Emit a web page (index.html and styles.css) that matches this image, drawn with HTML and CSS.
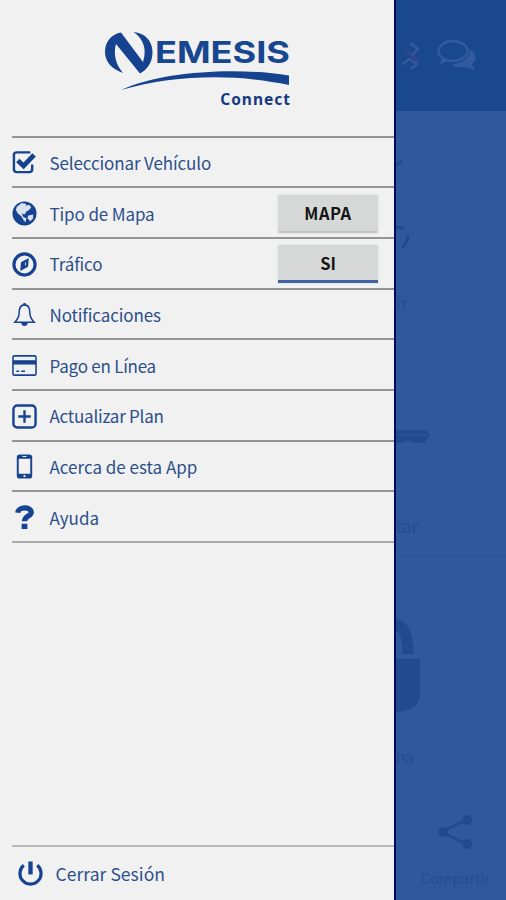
FILE: index.html
```html
<!DOCTYPE html>
<html lang="es">
<head>
<meta charset="utf-8">
<title>Nemesis Connect</title>
<link rel="stylesheet" href="styles.css">
</head>
<body>
<div class="app">
  <aside class="drawer">
    <header class="brand">
      <svg class="logo" viewBox="0 0 190 64" width="190" height="64">
        <path class="fill" d="M19 3.500L41 33C45 21 42 10 31.500 3C43 4 50.500 12 50.500 23C50.500 33 46 40 38 44.500L14 15C11 25 14 36 21 44C9 40 3 32 3 23C3 12 10 5 19 3.500Z"/>
        <text class="wordmark" x="53" y="34" textLength="135" lengthAdjust="spacingAndGlyphs">EMESIS</text>
        <path class="fill" d="M19 61C60 42 135 38 187 46.500V56C135 45 75 45 19 61Z"/>
      </svg>
      <div class="product">Connect</div>
    </header>
    <nav class="menu">
      <div class="row">
        <svg class="icon" viewBox="0 0 26 26"><path class="line" d="M21 15V20Q21 23 18 23H5Q2 23 2 20V5Q2 2.500 5 2.500H19"/><path class="heavy" d="M6 11L12 16.500L23 5"/></svg>
        <span class="label">Seleccionar Vehículo</span>
      </div>
      <div class="row">
        <svg class="icon" viewBox="0 0 26 26"><circle class="fill" cx="13" cy="13" r="12.500"/><path class="land" d="M5 6L10 2L15 3L14 5L18 4L20 7L17 10L15 11L13 14L10 13L12 17L15 18L14 22L12 20L10 16L6 13L4 9ZM17 15L22 14L22 18L19 21L16 18Z"/></svg>
        <span class="label">Tipo de Mapa</span>
        <button class="toggle">MAPA</button>
      </div>
      <div class="row">
        <svg class="icon" viewBox="0 0 26 26"><circle class="ring" cx="13" cy="13" r="11"/><path class="line" d="M16 8.500L15.500 14.500L10 17.500L10.500 11.500Z"/><path class="fill" d="M10 11L13.500 9V16L10 18Z"/></svg>
        <span class="label">Tráfico</span>
        <button class="toggle on">SI</button>
      </div>
      <div class="row">
        <svg class="icon" viewBox="0 0 26 26"><path class="thin" d="M13 3C8.500 3 7.500 7 7.500 11C7.500 16 5.500 18.500 3 21H23C20.500 18.500 18.500 16 18.500 11C18.500 7 17.500 3 13 3Z"/><path class="fill" d="M11.800 1H14.200V4H11.800ZM9.500 21H16.500Q16 25 13 25Q10 25 9.500 21Z"/></svg>
        <span class="label">Notificaciones</span>
      </div>
      <div class="row">
        <svg class="icon" viewBox="0 0 26 26"><rect class="thin" x="1" y="3" width="24" height="20" rx="1.500"/><path class="fill" d="M1 7.500H25V12H1Z"/><path class="thin" d="M4.500 19H7.500M9.500 19H13.500"/></svg>
        <span class="label tight">Pago en Línea</span>
      </div>
      <div class="row">
        <svg class="icon" viewBox="0 0 26 26"><rect class="line" x="1.500" y="1.500" width="23" height="23" rx="4"/><path class="line" d="M13 6.500V19.500M6.500 13H19.500"/></svg>
        <span class="label tight">Actualizar Plan</span>
      </div>
      <div class="row">
        <svg class="icon" viewBox="0 0 26 26"><path class="fill" fill-rule="evenodd" d="M8 .5H18Q21 .5 21 3.500V22.500Q21 25.500 18 25.500H8Q5 25.500 5 22.500V3.500Q5 .5 8 .5ZM7 5V20.500H19V5ZM11 2.200V3.200H15V2.200ZM13 21.800A1.200 1.200 0 1 0 13 24.200A1.200 1.200 0 1 0 13 21.800Z"/></svg>
        <span class="label loose">Acerca de esta App</span>
      </div>
      <div class="row">
        <svg class="icon" viewBox="0 0 26 26"><path class="query" d="M6 8C6.500 1.500 20 1.500 20 7.500C20 12 13 11 13 17"/><path class="fill" d="M10 19.500H16V25H10Z"/></svg>
        <span class="label loose">Ayuda</span>
      </div>
    </nav>
    <footer class="logout">
      <svg class="icon" viewBox="0 0 26 26"><path class="ring" d="M6 4.500A11 11 0 1 0 20 4.500"/><path class="power" d="M13 .5V14"/></svg>
      <span class="label wide">Cerrar Sesión</span>
    </footer>
  </aside>
  <main class="page">
    <header class="topbar">
      <svg viewBox="0 0 110 111" width="110" height="111">
        <path class="bt" d="M14 43L22 49L15 56M7 64L13 59L21 64L15 69"/>
        <path class="btred" d="M10 50L22 62"/>
        <ellipse class="bubble" cx="57" cy="51" rx="14.500" ry="10"/>
        <path class="bubblefill" d="M46 58L44 64L53 61ZM74 49Q84 57 76 64L79 70L70 67Q60 69 56 64Q73 63 74 49Z"/>
      </svg>
    </header>
    <section class="tile t1">
      <svg viewBox="0 0 110 180" width="110" height="180"><path class="shade" d="M0 54L6 50M0 116Q5 116 8 118M12 124Q12 131 6 137"/></svg>
      <span>ir</span>
    </section>
    <section class="tile t2">
      <svg viewBox="0 0 110 180" width="110" height="180"><path class="shadefill" d="M0 94H30L34 99L28 107H17L12 104L7 107H0Z"/><path class="gleam" d="M0 99H31"/></svg>
      <span>tar</span>
    </section>
    <section class="tile t3">
      <svg viewBox="0 0 110 180" width="110" height="180"><path class="shackle" d="M-3 66C8 66 12 77 12 96"/><path class="shadefill" d="M0 101H24V138Q22 153 0 154Z"/></svg>
      <span>na</span>
    </section>
    <section class="tile t4">
      <svg viewBox="0 0 110 78" width="110" height="78"><path class="share" d="M72 28L46 41L72 54"/><g class="shadefill"><circle cx="71" cy="29" r="5"/><circle cx="47" cy="41" r="5"/><circle cx="71" cy="53" r="5"/></g></svg>
      <span>Compartir</span>
    </section>
  </main>
</div>
</body>
</html>
```
FILE: styles.css
```css
* { box-sizing: border-box; }
body { margin: 0; font-family: "Noto Sans CJK JP", "Noto Sans", sans-serif; }
.app { display: flex; width: 506px; height: 900px; overflow: hidden; }

.drawer {
  flex: 0 0 396px;
  display: flex;
  flex-direction: column;
  background: #f1f1f1;
  border-right: 2px solid #04095f;
  color: #2c4f8c;
}
.brand { height: 135.5px; padding: 29px 0 0 102px; }
.logo { display: block; }
.wordmark { font: 700 29.500px Inter, sans-serif; fill: #174791; }
.product {
  width: 189px;
  margin-top: -5px;
  text-align: right;
  font: 700 15.500px/22px "Noto Sans", sans-serif;
  letter-spacing: 1px;
  color: #153981;
}
.menu { margin-left: 12px; border-bottom: 2px solid #aaa; height: 407.5px; display: flex; flex-direction: column; }
.row {
  flex: 1;
  display: flex;
  align-items: center;
  border-top: 2px solid #949494;
  padding-top: 2px;
}
.icon { width: 25px; height: 25px; flex: none; margin-right: 12.5px; overflow: visible; }
.label { font-size: 17px; line-height: 26px; letter-spacing: -.12px; white-space: nowrap; }
.label.tight { letter-spacing: -.24px; }
.label.loose { letter-spacing: 0; }
.label.wide { font-size: 17.500px; letter-spacing: .05px; }

.fill { fill: #164390; }
.land { fill: #d9e2ee; }
.line, .thin, .ring, .heavy, .power, .query { fill: none; stroke: #164390; }
.line { stroke-width: 2.500; }
.thin { stroke-width: 1.600; }
.ring { stroke-width: 3.300; }
.heavy { stroke-width: 5; }
.power { stroke-width: 4.500; }
.query { stroke-width: 5.500; }

.toggle {
  margin: 0 16px 0 auto;
  width: 100px;
  height: 38px;
  padding: 1px 0 0;
  border: 0;
  border-bottom: 2px solid #c2c4c4;
  border-radius: 2px;
  background: #d6d8d8;
  box-shadow: 0 0 2px #ccc;
  font: 700 16.500px/24px "Noto Sans CJK JP", sans-serif;
  letter-spacing: .5px;
  color: #151515;
}
.toggle.on { border-bottom: 3px solid #4162a5; border-radius: 2px 2px 0 0; letter-spacing: 0; }

.logout {
  margin: auto 0 0 12px;
  height: 55px;
  padding: 0 0 0 6px;
  display: flex;
  align-items: center;
  border-top: 2px solid #b8b8b8;
}

.page { flex: 1; overflow: hidden; background: #2e599c; color: #254d92; }
.page svg { display: block; }
.topbar { height: 111px; background: #19488f; }
.tile { overflow: hidden; border-bottom: 1px solid #2a5598; font-size: 18px; line-height: 26px; }
.t1 { height: 224px; }
.t2 { height: 222px; }
.t3 { height: 234px; }
.t4 { height: 109px; border: 0; }
.t2 svg { margin-top: 1px; }
.t3 svg { margin-top: 1px; }
.tile span { display: block; }
.t1 span { margin-top: -2px; }
.t2 span { margin-top: -3px; font-size: 17px; }
.t3 span { margin-top: 5px; font-size: 16px; letter-spacing: -1px; }
.t4 span { margin: -4px 0 0 25px; font-size: 14.500px; }
.bt { fill: none; stroke: #315b9a; stroke-width: 2.500; }
.btred { stroke: #3f4389; stroke-width: 2; }
.bubble { fill: none; stroke: #315b9e; stroke-width: 2.500; }
.bubblefill { fill: #315b9e; }
.shade, .shackle, .share { fill: none; stroke: #214b8f; }
.shade { stroke-width: 3; }
.shackle { stroke-width: 11; }
.share { stroke-width: 3; }
.shadefill { fill: #204b8f; }
.gleam { stroke: #315c9e; stroke-width: 1; }
```
